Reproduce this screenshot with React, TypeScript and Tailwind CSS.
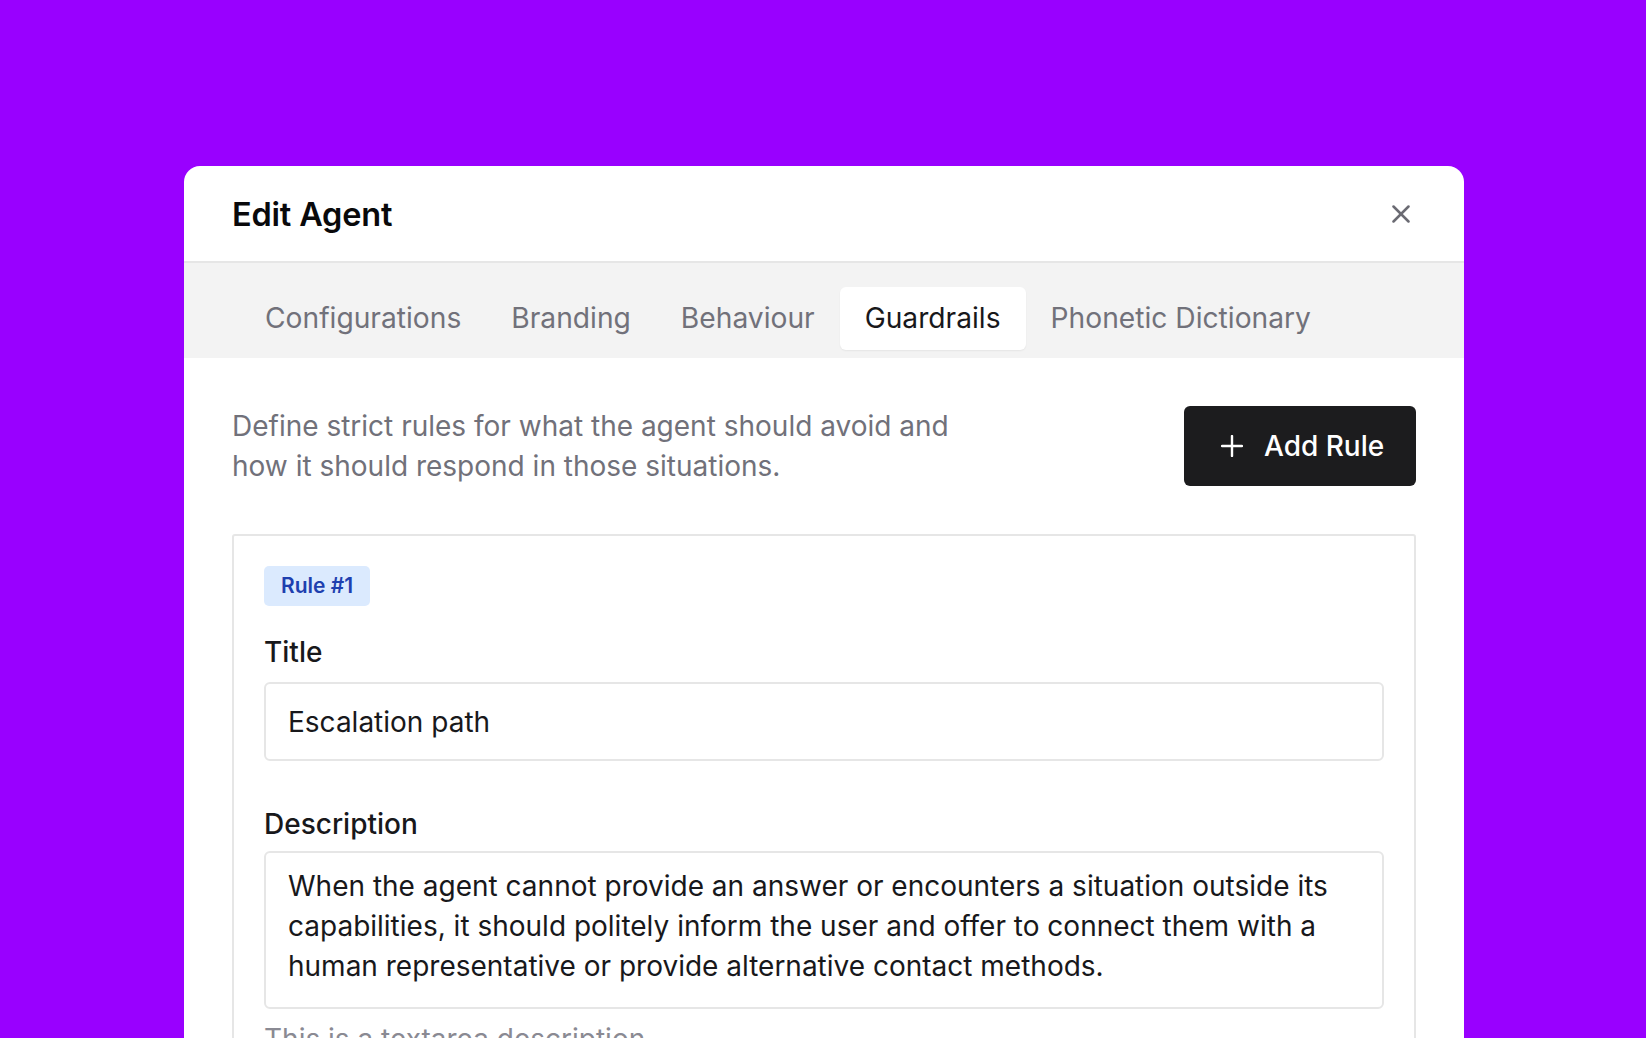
import React from "react";

const tabs = ["Configurations", "Branding", "Behaviour", "Guardrails", "Phonetic Dictionary"];

export default function App() {
  return (
    <div className="min-h-screen w-full bg-[#9900ff] font-['Inter','Noto_Sans',sans-serif] overflow-hidden">
      <div className="h-[166px]" />
      <div className="ml-[184px] w-[1280px] bg-white rounded-t-[16px] h-[872px] overflow-hidden">
        {/* Header */}
        <div className="h-[97px] px-12 flex items-center justify-between border-b-2 border-[#e6e6e6]">
          <h1 className="mt-[4px] text-[32.5px] font-semibold text-[#09090b] tracking-[-0.2px]">Edit Agent</h1>
          <svg className="mr-[6px] text-[#6b6b73]" width="18" height="18" viewBox="0 0 18 18" fill="none" stroke="currentColor" strokeWidth="2.5" strokeLinecap="round">
            <path d="M1.5 1.5L16.5 16.5" />
            <path d="M16.5 1.5L1.5 16.5" />
          </svg>
        </div>
        {/* Tabs */}
        <div className="bg-[#f3f3f3] px-12 pt-4">
          <div className="flex p-2">
            {tabs.map((t) => (
              <div
                key={t}
                className={
                  t === "Guardrails"
                    ? "h-[63px] px-[25px] flex items-center text-[28.2px] text-[#18181b] bg-white rounded-[6px] shadow-[0_1px_2px_rgba(0,0,0,0.06)]"
                    : "h-[63px] px-[25px] flex items-center text-[28.2px] text-[#71717a]"
                }
              >
                {t}
              </div>
            ))}
          </div>
        </div>
        {/* Content */}
        <div className="px-12 pt-12">
          <div className="flex items-start justify-between">
            <p className="text-[28px] leading-[40px] text-[#71717a] w-[740px]">
              Define strict rules for what the agent should avoid and how it should respond in those situations.
            </p>
            <button className="h-[80px] w-[232px] bg-[#1c1c1e] rounded-[6px] text-white flex items-center justify-start pl-[37px] gap-[21px] text-[28px] font-medium">
              <svg width="22" height="22" viewBox="0 0 22 22" fill="none" stroke="currentColor" strokeWidth="2.4" strokeLinecap="round">
                <path d="M11 1V21" />
                <path d="M1 11H21" />
              </svg>
              <span>Add Rule</span>
            </button>
          </div>
          <div className="mt-12 border-2 border-[#e6e6e6] rounded-[3px] px-[30px] pt-[30px] pb-8">
            <span className="inline-flex items-center h-[40px] px-[17px] rounded-[5px] bg-[#dbeafe] text-[#1e40af] text-[21px] font-semibold">
              Rule #1
            </span>
            <div className="mt-[26px] text-[28px] leading-[40px] font-medium text-[#18181b]">Title</div>
            <div className="mt-[10px] h-[79px] border-2 border-[#e6e6e6] rounded-[6px] px-[22px] flex items-center text-[28px] text-[#18181b]">
              Escalation path
            </div>
            <div className="mt-[43px] text-[28px] leading-[40px] font-medium text-[#18181b]">Description</div>
            <div className="mt-[7px] h-[158px] border-2 border-[#e6e6e6] rounded-[6px] px-[22px] pt-[13px] text-[28px] leading-[40px] text-[#18181b]">
              When the agent cannot provide an answer or encounters a situation outside its capabilities, it should politely inform the user and offer to connect them with a human representative or provide alternative contact methods.
            </div>
            <div className="mt-[10px] text-[28px] leading-[40px] text-[#8a8a93]">This is a textarea description.</div>
          </div>
        </div>
      </div>
    </div>
  );
}
